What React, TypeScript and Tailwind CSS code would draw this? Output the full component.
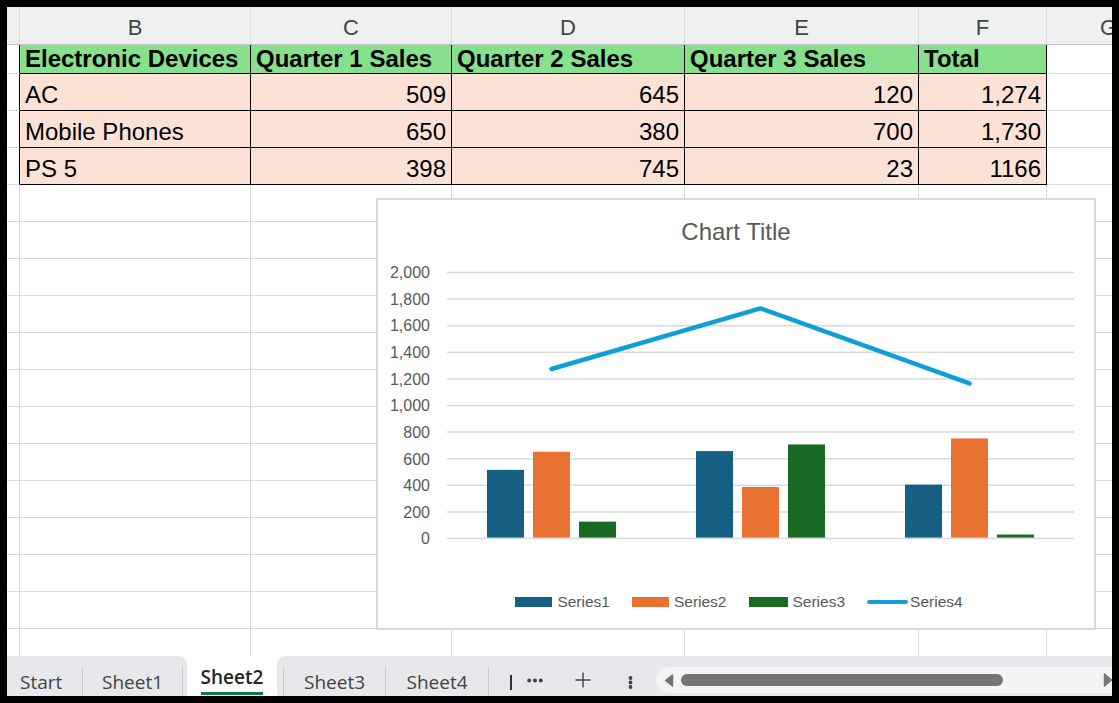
import React from "react";

const W = ["w-[13px]", "w-[231px]", "w-[201px]", "w-[233px]", "w-[234px]", "w-[128px]", "w-[124px]"];
const LETTERS = ["", "B", "C", "D", "E", "F", "G"];
const HEADERS = ["Electronic Devices", "Quarter 1 Sales", "Quarter 2 Sales", "Quarter 3 Sales", "Total"];
const ROWS = [
  ["AC", "509", "645", "120", "1,274"],
  ["Mobile Phones", "650", "380", "700", "1,730"],
  ["PS 5", "398", "745", "23", "1166"],
];
const DATA = [
  [509, 645, 120],
  [650, 380, 700],
  [398, 745, 23],
];
const TOTALS = [1274, 1730, 1166];
const BAR_COLORS = ["#156082", "#e97132", "#196b24"];

const ZERO = 340.6;
const SCALE = 266.2 / 2000;
const yOf = (v: number) => ZERO - v * SCALE;

function Chart() {
  const ticks = [0, 200, 400, 600, 800, 1000, 1200, 1400, 1600, 1800, 2000];
  const linePts = TOTALS.map((t, i) => `${71 + 209 * i + 104.5},${yOf(t)}`).join(" ");
  return (
    <div className="absolute left-[369px] top-[153px] w-[720px] h-[432px] bg-white border-2 border-[#d9d9d9] flex flex-col font-['Liberation_Sans',Arial,sans-serif]">
      <div className="h-[48px] shrink-0 pt-[20px] flex justify-center text-[24px] leading-[24px] text-[#595959]">
        Chart Title
      </div>
      <svg width="716" height="330" viewBox="2 50 716 330" className="shrink-0 block">
        {ticks.map((t) => (
          <g key={t}>
            <line x1={71} x2={698} y1={yOf(t)} y2={yOf(t)} stroke="#d9d9d9" strokeWidth={1.5} />
            <text
              x={54}
              y={yOf(t) + 5.8}
              textAnchor="end"
              fontSize={16}
              fill="#595959"
              fontFamily="'Liberation Sans', Arial, sans-serif"
            >
              {t.toLocaleString("en-US")}
            </text>
          </g>
        ))}
        {DATA.map((group, i) =>
          group.map((v, s) => (
            <rect
              key={`${i}-${s}`}
              x={71 + 209 * i + 40 + 46 * s}
              y={yOf(v) - 1}
              width={37}
              height={v * SCALE}
              fill={BAR_COLORS[s]}
            />
          ))
        )}
        <polyline
          points={linePts}
          fill="none"
          stroke="#0f9ed5"
          strokeWidth={4.5}
          strokeLinecap="round"
          strokeLinejoin="round"
        />
      </svg>
      <div className="h-[46px] shrink-0 flex items-center justify-center gap-[22px] text-[15.5px] leading-none text-[#595959] pl-[6px] pt-[2px]">
        {["Series1", "Series2", "Series3"].map((s, i) => (
          <div key={s} className="flex items-center gap-[5px]">
            {i === 0 && <div className="w-[37px] h-[10px] bg-[#156082]" />}
            {i === 1 && <div className="w-[37px] h-[10px] bg-[#e97132]" />}
            {i === 2 && <div className="w-[39px] h-[10px] bg-[#196b24]" />}
            <span>{s}</span>
          </div>
        ))}
        <div className="flex items-center gap-[2px]">
          <div className="w-[41px] h-[4px] rounded-full bg-[#0f9ed5]" />
          <span>Series4</span>
        </div>
      </div>
    </div>
  );
}

function Sep() {
  return <div className="w-px h-[29px] self-end bg-[#c8c8cc] shrink-0" />;
}

function TabBar() {
  return (
    <div className="h-[40px] shrink-0 flex bg-white font-['Open_Sans',sans-serif] text-[19px] text-[#424242]">
      <div className="w-[180px] shrink-0 flex bg-[#e8e8ec] rounded-tr-[9px]">
        <div className="w-[75px] shrink-0 pl-[13px] flex items-end pb-[4px] leading-none">Start</div>
        <Sep />
        <div className="w-[99px] shrink-0 flex justify-center items-end pb-[4px] leading-none">Sheet1</div>
        <Sep />
      </div>
      <div className="w-[90px] shrink-0 flex justify-center items-end pb-[1px]">
        <span className="leading-none pb-[5px] border-b-[3px] border-[#107c41] font-semibold text-[#242424]">
          Sheet2
        </span>
      </div>
      <div className="flex-1 flex bg-[#e8e8ec] rounded-tl-[9px] pl-[6px]">
        <Sep />
        <div className="w-[101px] shrink-0 flex justify-center items-end pb-[4px] leading-none">Sheet3</div>
        <Sep />
        <div className="w-[102px] shrink-0 flex justify-center items-end pb-[4px] leading-none">Sheet4</div>
        <Sep />
        <div className="flex items-start pt-[19px] shrink-0">
          <div className="ml-[21px] w-[2px] h-[15px] bg-[#333]" />
        </div>
        <div className="flex items-start pt-[22px] shrink-0 ml-[15px]">
          <svg width="16" height="5" viewBox="0 0 16 5">
            <circle cx="2.2" cy="2.5" r="2" fill="#424242" />
            <circle cx="8" cy="2.5" r="2" fill="#424242" />
            <circle cx="13.8" cy="2.5" r="2" fill="#424242" />
          </svg>
        </div>
        <div className="flex items-start pt-[16px] shrink-0 ml-[32px]">
          <svg width="16" height="16" viewBox="0 0 16 16">
            <path d="M8 0.5V15.5M0.5 8H15.5" stroke="#424242" strokeWidth="1.4" />
          </svg>
        </div>
        <div className="flex items-start pt-[20px] shrink-0 ml-[37px]">
          <svg width="5" height="13" viewBox="0 0 5 13">
            <circle cx="2.5" cy="2" r="1.9" fill="#424242" />
            <circle cx="2.5" cy="6.5" r="1.9" fill="#424242" />
            <circle cx="2.5" cy="11" r="1.9" fill="#424242" />
          </svg>
        </div>
        <div className="ml-[23px] mt-[11px] h-[26px] flex-1 rounded-l-full bg-[#f4f4f4] flex items-center min-w-0">
          <svg width="10" height="13" viewBox="0 0 10 13" className="ml-[8px] shrink-0">
            <polygon points="8.5,1 8.5,12 1.5,6.5" fill="#757575" stroke="#757575" strokeWidth="1.5" strokeLinejoin="round" />
          </svg>
          <div className="ml-[7px] w-[322px] h-[12px] rounded-full bg-[#757575] shrink-0" />
          <svg width="10" height="14" viewBox="0 0 10 14" className="ml-[100px] shrink-0">
            <polygon points="1.5,1 1.5,13 8.5,7" fill="#757575" stroke="#757575" strokeWidth="1.5" strokeLinejoin="round" />
          </svg>
        </div>
      </div>
    </div>
  );
}

export default function App() {
  const emptyRows = Array.from({ length: 13 });
  return (
    <div className="w-[1119px] h-[703px] bg-black pt-[7px] pl-[7px]">
      <div className="w-[1105px] h-[689px] bg-white overflow-hidden flex flex-col font-['Liberation_Sans',Arial,sans-serif]">
        {/* Column headers */}
        <div className="flex h-[38px] shrink-0 bg-[#f0f0f0] border-b border-[#c6c6c6]">
          {LETTERS.map((l, i) => (
            <div
              key={i}
              className={`${W[i]} shrink-0 border-r border-[#dadada] flex justify-center pt-[4px] text-[22px] leading-[34px] text-[#444444]`}
            >
              {l}
            </div>
          ))}
        </div>

        {/* Sheet body */}
        <div className="relative flex-1 overflow-hidden">
          <div className="flex h-[29px]">
            <div className={`${W[0]} shrink-0 border-r border-b border-r-black border-b-[#dadada]`} />
            {HEADERS.map((h, i) => (
              <div
                key={h}
                className={`${W[i + 1]} shrink-0 bg-[#86e08c] border-r border-b border-black pl-[5px] text-[24px] font-bold leading-[28px] whitespace-nowrap text-black`}
              >
                {h}
              </div>
            ))}
            <div className={`${W[6]} shrink-0 border-r border-b border-[#dadada]`} />
          </div>
          {ROWS.map((r, ri) => (
            <div key={ri} className="flex h-[37px]">
              <div className={`${W[0]} shrink-0 border-r border-b border-r-black border-b-[#dadada]`} />
              {r.map((c, ci) => (
                <div
                  key={ci}
                  className={`${W[ci + 1]} shrink-0 bg-[#fbe2d5] border-r border-b border-black flex items-center pt-[5px] text-[24px] text-black whitespace-nowrap ${
                    ci === 0 ? "pl-[5px]" : "justify-end pr-[5px]"
                  }`}
                >
                  {c}
                </div>
              ))}
              <div className={`${W[6]} shrink-0 border-r border-b border-[#dadada]`} />
            </div>
          ))}
          {emptyRows.map((_, ri) => (
            <div key={ri} className="flex h-[37px]">
              {W.map((w, ci) => (
                <div key={ci} className={`${w} shrink-0 border-r border-b border-[#dadada]`} />
              ))}
            </div>
          ))}
          <Chart />
        </div>

        <TabBar />
      </div>
    </div>
  );
}
